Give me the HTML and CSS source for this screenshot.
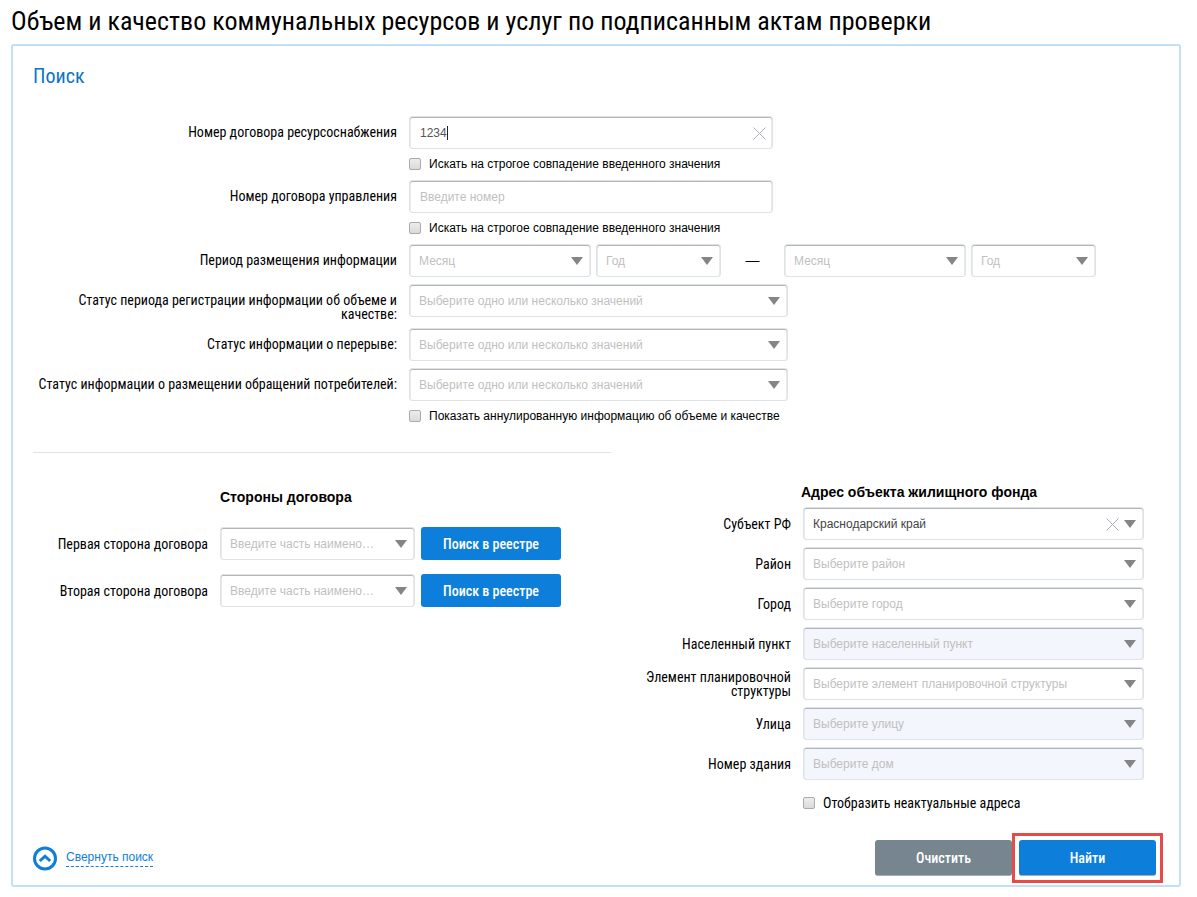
FILE: index.html
```html
<!DOCTYPE html>
<html lang="ru">
<head>
<meta charset="utf-8">
<title>Объем и качество коммунальных ресурсов и услуг</title>
<link rel="stylesheet" href="styles.css">
</head>
<body>
<h1 class="page-title">Объем и качество коммунальных ресурсов и услуг по подписанным актам проверки</h1>
<form class="panel">
  <h2 class="panel-title">Поиск</h2>

  <div class="rows main-rows">
    <div class="row">
      <label class="label" for="supply">Номер договора ресурсоснабжения</label>
      <div class="field field-input">
        <input class="control" id="supply" type="text" value="1234">
        <span class="caret"></span>
        <button class="clear" type="button" aria-label="Очистить поле"><svg width="13" height="13" viewBox="0 0 13 13"><path d="M.5.5l12 12M12.500.500l-12 12"/></svg></button>
      </div>
    </div>
    <div class="row">
      <label class="check check-start"><input class="box" type="checkbox">Искать на строгое совпадение введенного значения</label>
    </div>
    <div class="row">
      <label class="label" for="manage">Номер договора управления</label>
      <div class="field field-input"><input class="control" id="manage" type="text" placeholder="Введите номер"></div>
    </div>
    <div class="row">
      <label class="check check-start"><input class="box" type="checkbox">Искать на строгое совпадение введенного значения</label>
    </div>
    <div class="row">
      <label class="label" for="from-month">Период размещения информации</label>
      <div class="period">
        <div class="field month"><select class="control select" id="from-month"><option>Месяц</option></select></div>
        <div class="field year"><select class="control select" aria-label="Год начала"><option>Год</option></select></div>
        <span class="dash">—</span>
        <div class="field month"><select class="control select" aria-label="Месяц окончания"><option>Месяц</option></select></div>
        <div class="field year"><select class="control select" aria-label="Год окончания"><option>Год</option></select></div>
      </div>
    </div>
    <div class="row">
      <label class="label" for="status-reg">Статус периода регистрации информации об объеме и качестве:</label>
      <div class="field field-status"><select class="control select" id="status-reg"><option>Выберите одно или несколько значений</option></select></div>
    </div>
    <div class="row">
      <label class="label" for="status-break">Статус информации о перерыве:</label>
      <div class="field field-status"><select class="control select" id="status-break"><option>Выберите одно или несколько значений</option></select></div>
    </div>
    <div class="row">
      <label class="label" for="status-appeal">Статус информации о размещении обращений потребителей:</label>
      <div class="field field-status"><select class="control select" id="status-appeal"><option>Выберите одно или несколько значений</option></select></div>
    </div>
    <div class="row">
      <label class="check check-start"><input class="box" type="checkbox">Показать аннулированную информацию об объеме и качестве</label>
    </div>
  </div>

  <div class="columns">
    <section class="parties">
      <h3 class="group-title parties-title">Стороны договора</h3>
      <div class="party">
        <label class="label" for="party1">Первая сторона договора</label>
        <div class="field"><select class="control select" id="party1"><option>Введите часть наимено…</option></select></div>
        <button class="btn btn-lookup" type="button">Поиск в реестре</button>
      </div>
      <div class="party">
        <label class="label" for="party2">Вторая сторона договора</label>
        <div class="field"><select class="control select" id="party2"><option>Введите часть наимено…</option></select></div>
        <button class="btn btn-lookup" type="button">Поиск в реестре</button>
      </div>
    </section>

    <section class="address">
      <h3 class="group-title address-title">Адрес объекта жилищного фонда</h3>
      <div class="rows">
        <div class="address-row">
          <label class="label" for="region">Субъект РФ</label>
          <div class="field">
            <select class="control select chosen" id="region"><option>Краснодарский край</option></select>
            <button class="clear clear-select" type="button" aria-label="Сбросить субъект"><svg width="13" height="13" viewBox="0 0 13 13"><path d="M.5.5l12 12M12.500.500l-12 12"/></svg></button>
          </div>
        </div>
        <div class="address-row">
          <label class="label" for="district">Район</label>
          <div class="field"><select class="control select" id="district"><option>Выберите район</option></select></div>
        </div>
        <div class="address-row">
          <label class="label" for="city">Город</label>
          <div class="field"><select class="control select" id="city"><option>Выберите город</option></select></div>
        </div>
        <div class="address-row">
          <label class="label" for="town">Населенный пункт</label>
          <div class="field"><select class="control select" id="town" disabled><option>Выберите населенный пункт</option></select></div>
        </div>
        <div class="address-row">
          <label class="label" for="plan">Элемент планировочной структуры</label>
          <div class="field"><select class="control select" id="plan"><option>Выберите элемент планировочной структуры</option></select></div>
        </div>
        <div class="address-row">
          <label class="label" for="street">Улица</label>
          <div class="field"><select class="control select" id="street" disabled><option>Выберите улицу</option></select></div>
        </div>
        <div class="address-row">
          <label class="label" for="house">Номер здания</label>
          <div class="field"><select class="control select" id="house" disabled><option>Выберите дом</option></select></div>
        </div>
        <div class="address-row address-check">
          <label class="check check-start check-condensed"><input class="box" type="checkbox">Отобразить неактуальные адреса</label>
        </div>
      </div>
    </section>
  </div>

  <div class="footer">
    <a class="collapse" href="#">
      <svg class="collapse-icon" width="25" height="25" viewBox="0 0 25 25"><circle cx="12" cy="12.500" r="10.500"/><path d="M6.800 15l5.200-4.800 5.200 4.800"/></svg>
      <span class="collapse-text">Свернуть поиск</span>
    </a>
    <div class="actions">
      <button class="btn btn-action btn-reset" type="reset">Очистить</button>
      <button class="btn btn-action btn-find" type="submit">Найти</button>
    </div>
  </div>
</form>
</body>
</html>
```

FILE: styles.css
```css
* { box-sizing: border-box; }

body {
  margin: 0;
  padding: 4px 16px 10px 11px;
  background: #fff;
  color: #000;
  font: 12px/16px "Liberation Sans", Arial, sans-serif;
}

h1, h2, h3 { margin: 0; }

.page-title {
  font: 400 26px/34px "Roboto Condensed", "Roboto", sans-serif;
  margin-bottom: 6px;
}

.panel {
  border: 2px solid #c1dff7;
  border-radius: 3px;
  padding: 18px 20px 9px;
}

.panel-title {
  font: 400 20px/24px "Roboto Condensed", "Roboto", sans-serif;
  color: #0e74c0;
  margin-bottom: 28px;
}

.rows {
  display: flex;
  flex-direction: column;
  gap: 7px;
}

.row {
  display: grid;
  grid-template-columns: 364fr 750fr;
  column-gap: 12px;
  align-items: start;
}

.label {
  font: 400 14px/14px "Roboto Condensed", "Roboto", sans-serif;
  text-align: right;
}

.row .label { padding-top: 9px; }

.field {
  position: relative;
  min-width: 0;
}

.field-input { width: 364px; max-width: 100%; }
.field-status { width: 379px; max-width: 100%; }

.control {
  display: block;
  width: 100%;
  height: 33px;
  padding: 0 10px;
  border: 1px solid #e0e3e6;
  border-radius: 3px;
  background: #fff;
  box-shadow: inset 0 1px 0 #b3b6b9, inset 1px 0 0 #e8eaec, inset -1px 0 0 #e8eaec;
  font: 12px/16px "Liberation Sans", Arial, sans-serif;
  color: #555;
  outline: none;
}

.control::placeholder { color: #bfbfbf; opacity: 1; }

.select {
  appearance: none;
  padding: 0 9px;
  color: #bfbfbf;
  opacity: 1;
}

.select:disabled { background: #f3f6fc; }
.chosen { color: #444; }

.field:has(.select)::after {
  content: "";
  position: absolute;
  right: 8px;
  top: 13px;
  border: 6px solid transparent;
  border-top: 8px solid #858585;
  border-bottom: 0;
  pointer-events: none;
}

.caret {
  position: absolute;
  left: 38px;
  top: 10px;
  width: 1px;
  height: 14px;
  background: #222;
}

.clear {
  position: absolute;
  right: 7px;
  top: 11px;
  display: flex;
  padding: 0;
  border: 0;
  background: none;
}

.clear-select { right: 25px; }

.clear path {
  stroke: #a9afb9;
  stroke-width: 1;
  fill: none;
}

.check {
  display: flex;
  align-items: center;
  gap: 8px;
  height: 16px;
  margin-bottom: 1px;
}

.check-start { grid-column: 2; }

.check-condensed { font: 400 14px/16px "Roboto Condensed", "Roboto", sans-serif; }

.box {
  appearance: none;
  width: 12px;
  height: 12px;
  margin: 0;
  border: 1px solid #aaa;
  border-radius: 2px;
  background: linear-gradient(#ededed, #dadada);
}

.period { display: flex; }
.month { flex: 0 1 182px; margin-right: 5px; }
.year { flex: 0 1 125px; }
.dash {
  flex: 0 1 63px;
  text-align: center;
  line-height: 33px;
  font-size: 14px;
}

.main-rows { padding-bottom: 27px; }

.columns {
  display: grid;
  grid-template-columns: 578fr 548fr;
  margin-bottom: 28px;
}

.group-title { font: 700 14px/16px "Liberation Sans", Arial, sans-serif; }

.parties { border-top: 1px solid #e2e2e2; }

.parties-title {
  padding-left: 187px;
  margin: 36px 0 22px;
}

.party {
  display: grid;
  grid-template-columns: 181px minmax(0, 195px) 140px;
  column-gap: 6px;
  align-items: center;
  margin-bottom: 14px;
}

.party .label { padding-right: 6px; }

.btn {
  border: 0;
  border-radius: 3px;
  color: #fff;
  background: #0d7ed9;
  font: 500 14px/16px "Roboto Condensed", "Roboto", sans-serif;
}

.btn-lookup { height: 33px; padding: 0; }

.address { padding: 32px 15px 0 0; }

.address-title {
  padding-left: 190px;
  margin-bottom: 7px;
}

.address-row {
  display: grid;
  grid-template-columns: 180fr 341fr;
  column-gap: 12px;
  align-items: center;
}

.address-check { padding-top: 8px; }

.footer {
  display: flex;
  justify-content: space-between;
  align-items: center;
  padding-right: 3px;
}

.collapse {
  display: flex;
  align-items: center;
  gap: 8px;
  color: #0d7ed9;
  text-decoration: none;
}

.collapse-icon {
  fill: none;
  stroke: #0d7ed9;
  stroke-width: 3;
}

.collapse-text { border-bottom: 1px dashed #0d7ed9; line-height: 17px; }

.actions { display: flex; gap: 7px; }

.btn-action {
  width: 137px;
  height: 36px;
  border-bottom: 1px solid #a4adb5;
}

.btn-reset { background: #77858f; }

.btn-find { position: relative; }

.btn-find::after {
  content: "";
  position: absolute;
  inset: -7px -7px -8px;
  border: 3px solid #e84a46;
}
```
